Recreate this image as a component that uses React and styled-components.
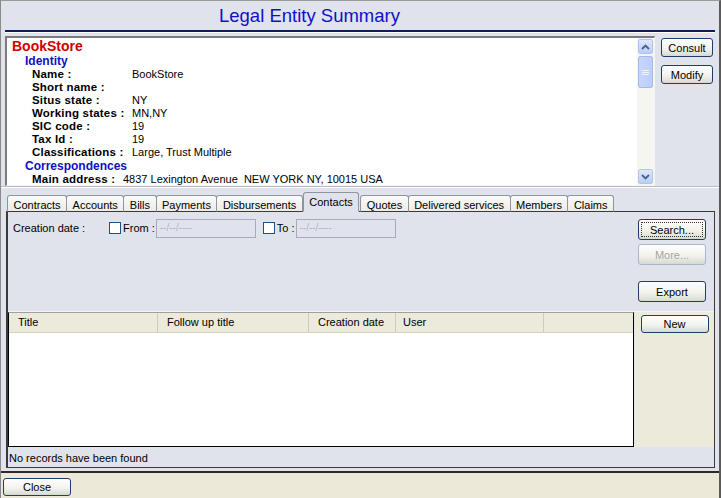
import React from 'react';
import styled, { createGlobalStyle, css } from 'styled-components';

const Global = createGlobalStyle`
    html, body {
        margin: 0;
        padding: 0;
        background: #e0e3ec;
        font-family: "Liberation Sans", Arial, sans-serif;
        font-size: 11px;
        color: #000;
    }
`;

const Window = styled.div`
    width: 721px;
    height: 498px;
    box-sizing: border-box;
    display: flex;
    flex-direction: column;
    background: #e0e3ec;
    border-left: 1px solid #8a8a8a;
    border-right: 2px solid #5a5a5a;
    border-top: 1px solid #9a9a9a;
    overflow: hidden;
`;

const Header = styled.div`
    height: 29px;
    margin: 0 4px 0 4px;
    border-bottom: 2px solid #101a60;
    box-shadow: 0 1px 0 #ffffff;
    display: flex;
    align-items: center;
    padding-left: 214px;

    & > h1 {
        margin: 1px 0 0 0;
        font-size: 18.5px;
        font-weight: normal;
        color: #1010c8;
        font-family: "Liberation Sans", Arial, sans-serif;
    }
`;

const TopArea = styled.div`
    display: flex;
    margin-top: 4px;
    height: 150px;
    border-bottom: 1px solid #b8bcc6;
    box-shadow: 0 1px 0 #ffffff;
`;

const SummaryBox = styled.div`
    margin-left: 4px;
    width: 650px;
    box-sizing: border-box;
    background: #fff;
    border-top: 2px solid #7a7a7a;
    border-left: 2px solid #7a7a7a;
    border-bottom: 1px solid #f4f4f4;
    border-right: 1px solid #f4f4f4;
    display: flex;
`;

const SummaryText = styled.div`
    flex: 1;
    padding-top: 1px;
    overflow: hidden;
`;

const EntityName = styled.div`
    color: #d00000;
    font-weight: bold;
    font-size: 14px;
    line-height: 15px;
    padding-left: 5px;
`;

const Section = styled.div`
    color: #1010c0;
    font-weight: bold;
    font-size: 12px;
    line-height: 14px;
    padding-left: 18px;
`;

const Field = styled.div`
    display: flex;
    line-height: 13px;
    padding-left: 25px;
    white-space: nowrap;

    & > b {
        width: ${p => p.$labelWidth || '100px'};
        font-size: 11.5px;
        letter-spacing: 0.2px;
    }
    & > span {
        font-size: 11px;
    }
`;

const ScrollBar = styled.div`
    width: 17px;
    display: flex;
    flex-direction: column;
    background: #f6f6f1;
    padding: 1px 0;
`;

const ScrollBtn = styled.div`
    width: 15px;
    height: 15px;
    margin-left: 1px;
    border-radius: 2px;
    background: linear-gradient(#dfe8fd, #b9cdf9);
    border: 1px solid #b2c4ee;
    box-sizing: border-box;
    display: flex;
    align-items: center;
    justify-content: center;
    margin-top: ${p => (p.$bottom ? 'auto' : '0')};
`;

const Thumb = styled.div`
    margin: 2px 0 0 1px;
    width: 15px;
    height: 32px;
    box-sizing: border-box;
    border-radius: 2px;
    border: 1px solid #a6bce8;
    background: linear-gradient(90deg, #c6d6fb, #bccefa);
    display: flex;
    align-items: center;
    justify-content: center;
`;

const SideButtons = styled.div`
    flex: 1;
    display: flex;
    flex-direction: column;
    align-items: center;
    gap: 8px;
    padding-top: 2px;
`;

const Button = styled.button`
    font-family: "Liberation Sans", Arial, sans-serif;
    font-size: 11px;
    color: ${p => (p.disabled ? '#a6a6a0' : '#000')};
    width: ${p => p.$w || '68px'};
    height: ${p => p.$h || '21px'};
    padding: 0;
    border: 1px solid ${p => (p.disabled ? '#a9b7cc' : '#1c3d6e')};
    border-radius: 3px;
    background: linear-gradient(#ffffff 0%, #f1f1ec 60%, #d9d8d0 100%);
    box-sizing: border-box;
    ${p => p.$focus && css`
        outline: 1px dotted #333;
        outline-offset: -4px;
    `}
`;

const Tabs = styled.div`
    display: flex;
    align-items: flex-end;
    margin: 5px 0 0 6px;
    height: 20px;
    position: relative;
    z-index: 1;
`;

const Tab = styled.div`
    height: ${p => (p.$active ? '20px' : '17px')};
    padding: 0 5.5px;
    box-sizing: border-box;
    border: 1px solid #8d96a0;
    border-bottom: ${p => (p.$active ? '1px solid #e0e3ec' : '1px solid #3a3a3a')};
    border-radius: 3px 3px 0 0;
    background: ${p => (p.$active ? '#e0e3ec' : 'linear-gradient(#fbfbfa, #ecebe6)')};
    margin-left: ${p => (p.$active ? '0' : '-1px')};
    margin-right: ${p => (p.$active ? '2px' : '0')};
    display: flex;
    align-items: center;
    font-size: 11px;
    line-height: 14px;
    padding-top: ${p => (p.$active ? '0' : '2px')};
    &:first-child { margin-left: 0; }
`;

const Panel = styled.div`
    margin: -1px 4px 0 5px;
    height: 257px;
    box-sizing: border-box;
    border-top: 1px solid #3a3a3a;
    border-left: 2px solid #3a3a3a;
    border-right: 1px solid #3a3a3a;
    border-bottom: 1px solid #3a3a3a;
    display: flex;
    flex-direction: column;
`;

const FilterArea = styled.div`
    display: flex;
    height: 100px;
    padding: 7px 0 0 5px;
    box-sizing: border-box;
    border-bottom: 1px solid #f4f4f8;
`;

const FilterRow = styled.div`
    flex: 1;
    display: flex;
    align-items: flex-start;
    font-size: 11px;

    & > label {
        line-height: 19px;
    }
`;

const Check = styled.span`
    width: 12px;
    height: 12px;
    box-sizing: border-box;
    border: 1px solid #1c5180;
    background: #fff;
    margin: 3px 2px 0 0;
`;

const DateInput = styled.div`
    width: 100px;
    height: 19px;
    box-sizing: border-box;
    border: 1px solid #a4abbc;
    color: #b0b4bc;
    font-size: 10px;
    line-height: 16px;
    padding-left: 3px;
    margin-left: 1px;
`;

const FilterButtons = styled.div`
    width: 76px;
    display: flex;
    flex-direction: column;
    gap: 4px;

    & > :nth-child(3) { margin-top: 12px; }
`;

const ListArea = styled.div`
    display: flex;
    height: 135px;
`;

const Grid = styled.div`
    width: 626px;
    box-sizing: border-box;
    border: 1px solid #000;
    border-top: 1px solid #a0a0a0;
    background: #fff;
    display: flex;
    flex-direction: column;
`;

const GridHeader = styled.div`
    display: flex;
    height: 19px;
    background: #ebeadb;
    border-bottom: 1px solid #d6d2c2;
`;

const Col = styled.div`
    width: ${p => p.$w}px;
    box-sizing: border-box;
    padding-left: ${p => p.$pad || 9}px;
    font-size: 11px;
    line-height: 19px;
    border-right: 1px solid #d0ccbc;
    &:last-child { border-right: none; flex: 1; }
`;

const ListSide = styled.div`
    flex: 1;
    background: #ebeadb;
    display: flex;
    justify-content: center;
    padding-top: 3px;
    margin-left: 1px;
`;

const Status = styled.div`
    padding: 4px 0 0 1px;
    font-size: 11px;
    line-height: 14px;
`;

const Footer = styled.div`
    margin-top: 3px;
    flex: 1;
    background: #ece9d8;
    border-top: 2px solid #2a2a2a;
    padding: 5px 0 0 2px;
`;

const fields = [
    ['Name :', 'BookStore'],
    ['Short name :', ''],
    ['Situs state :', 'NY'],
    ['Working states :', 'MN,NY'],
    ['SIC code :', '19'],
    ['Tax Id :', '19'],
    ['Classifications :', 'Large, Trust Multiple'],
];

const tabs = ['Contracts', 'Accounts', 'Bills', 'Payments', 'Disbursements', 'Contacts', 'Quotes', 'Delivered services', 'Members', 'Claims'];

const Arrow = ({ down }) => (
    <svg width="9" height="6" viewBox="0 0 9 6">
        <path d={down ? 'M1 1 L4.5 4.5 L8 1' : 'M1 5 L4.5 1.5 L8 5'} fill="none" stroke="#4d6185" strokeWidth="1.8" />
    </svg>
);

const App = () => {
    return (
        <Window>
            <Global />
            <Header><h1>Legal Entity Summary</h1></Header>
            <TopArea>
                <SummaryBox>
                    <SummaryText>
                        <EntityName>BookStore</EntityName>
                        <Section>Identity</Section>
                        {fields.map(([l, v]) => (
                            <Field key={l}><b>{l}</b><span>{v}</span></Field>
                        ))}
                        <Section>Correspondences</Section>
                        <Field $labelWidth="91px"><b>Main address :</b><span>4837 Lexington Avenue&nbsp; NEW YORK NY, 10015 USA</span></Field>
                    </SummaryText>
                    <ScrollBar>
                        <ScrollBtn><Arrow /></ScrollBtn>
                        <Thumb>
                            <svg width="7" height="7" viewBox="0 0 7 7">
                                <path d="M0 1.5H7M0 3.5H7M0 5.5H7" stroke="#eef3ff" strokeWidth="1" />
                            </svg>
                        </Thumb>
                        <ScrollBtn $bottom><Arrow down /></ScrollBtn>
                    </ScrollBar>
                </SummaryBox>
                <SideButtons>
                    <Button $w="52px" $h="19px">Consult</Button>
                    <Button $w="52px" $h="19px">Modify</Button>
                </SideButtons>
            </TopArea>
            <Tabs>
                {tabs.map(t => (
                    <Tab key={t} $active={t === 'Contacts'}>{t}</Tab>
                ))}
            </Tabs>
            <Panel>
                <FilterArea>
                    <FilterRow>
                        <label style={{ width: 96 }}>Creation date :</label>
                        <Check />
                        <label>From :</label>
                        <DateInput>--/--/----</DateInput>
                        <span style={{ width: 7 }} />
                        <Check />
                        <label>To :</label>
                        <DateInput>--/--/----</DateInput>
                    </FilterRow>
                    <FilterButtons>
                        <Button $focus>Search...</Button>
                        <Button disabled>More...</Button>
                        <Button>Export</Button>
                    </FilterButtons>
                </FilterArea>
                <ListArea>
                    <Grid>
                        <GridHeader>
                            <Col $w={149}>Title</Col>
                            <Col $w={151}>Follow up title</Col>
                            <Col $w={87}>Creation date</Col>
                            <Col $w={148} $pad={7}>User</Col>
                            <Col />
                        </GridHeader>
                    </Grid>
                    <ListSide>
                        <Button $w="68px" $h="18px">New</Button>
                    </ListSide>
                </ListArea>
                <Status>No records have been found</Status>
            </Panel>
            <Footer>
                <Button $h="18px">Close</Button>
            </Footer>
        </Window>
    );
};

export default App;
